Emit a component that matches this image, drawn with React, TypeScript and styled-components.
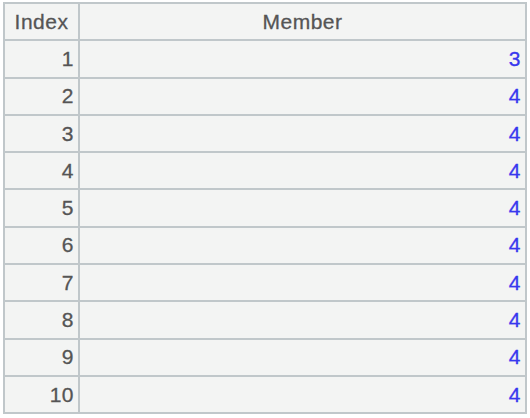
import React from "react";
import styled, { createGlobalStyle } from "styled-components";

const Global = createGlobalStyle`
  html, body { margin: 0; padding: 0; background: #ffffff; }
  body { font-family: "Liberation Sans", Arial, sans-serif; }
`;

const Page = styled.div`
  padding: 2px 3px 0 3px;
`;

const Table = styled.div`
  width: 524px;
  display: grid;
  grid-template-columns: 73px 1fr;
  grid-auto-rows: 35.3px;
  gap: 2px;
  padding: 2px;
  box-sizing: border-box;
  background: #c0c7ca;
`;

const Cell = styled.div<{ $align: "left" | "right" | "center"; $blue?: boolean }>`
  background: #f3f4f3;
  display: flex;
  align-items: center;
  justify-content: ${(p) => (p.$align === "right" ? "flex-end" : p.$align === "center" ? "center" : "flex-start")};
  padding: 0 4px 1px 4px;
  font-size: 21px;
  letter-spacing: 0.5px;
  -webkit-text-stroke: 0.3px currentColor;
  color: ${(p) => (p.$blue ? "#3838ee" : "#555555")};
  line-height: 1;
`;

const data = [3, 4, 4, 4, 4, 4, 4, 4, 4, 4];

export default function App() {
  return (
    <Page>
      <Global />
      <Table>
        <Cell $align="center">Index</Cell>
        <Cell $align="center">Member</Cell>
        {data.map((v, i) => (
          <React.Fragment key={i}>
            <Cell $align="right">{i + 1}</Cell>
            <Cell $align="right" $blue>
              {v}
            </Cell>
          </React.Fragment>
        ))}
      </Table>
    </Page>
  );
}
